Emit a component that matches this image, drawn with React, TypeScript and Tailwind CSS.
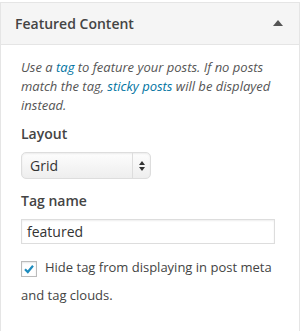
export default function App() {
  return (
    <div className="w-[300px] h-[331px] bg-white pt-[2px] font-['Open_Sans',sans-serif] text-[#444]">
      <div className="h-[329px] border-x border-t border-[#e5e5e5] bg-white">
        <div className="h-[42px] flex items-center justify-between bg-[#f5f5f5] border-b border-[#e5e5e5] pl-[14px] pr-[16px]">
          <h3 className="text-[14px] font-semibold text-[#444] leading-none">Featured Content</h3>
          <span className="w-0 h-0 border-x-[5px] border-x-transparent border-b-[6px] border-b-[#555] mb-[1px]" />
        </div>
        <div className="pl-[20px] pr-[20px] pt-[13px]">
          <p className="text-[13px] italic leading-[19px] text-[#555] pr-[4px]">
            Use a <a className="text-[#0074a2]">tag</a> to feature your posts. If no posts match the tag,{' '}
            <a className="text-[#0074a2]">sticky posts</a> will be displayed instead.
          </p>
          <div className="mt-[9px] text-[14px] font-semibold leading-[20px]">Layout</div>
          <div className="mt-[8px] w-[130px] h-[27px] flex rounded-[5px] border border-[#ddd] bg-gradient-to-b from-[#fdfdfd] to-[#eeeeee] shadow-[inset_0_1px_2px_rgba(0,0,0,0.07)]">
            <span className="flex-1 pl-[8px] text-[14px] leading-[25px] text-[#333]">Grid</span>
            <span className="w-[18px] border-l border-[#ddd] flex flex-col items-center justify-center gap-[2px]">
              <span className="w-0 h-0 border-x-[3px] border-x-transparent border-b-[4px] border-b-[#333]" />
              <span className="w-0 h-0 border-x-[3px] border-x-transparent border-t-[4px] border-t-[#333]" />
            </span>
          </div>
          <div className="mt-[12px] text-[14px] font-semibold leading-[20px]">Tag name</div>
          <div className="mt-[8px] w-[254px] h-[25px] border border-[#ddd] shadow-[inset_0_1px_2px_rgba(0,0,0,0.07)] pl-[5px] text-[14px] leading-[23px] text-[#333]">
            featured
          </div>
          <div className="mt-[9px] text-[13px] leading-[28px] text-[#444]">
            <span className="inline-flex align-[-3px] w-[16px] h-[16px] mr-[8px] border border-[#bbb] shadow-[inset_0_1px_2px_rgba(0,0,0,0.1)] items-center justify-center bg-white">
              <svg width="12" height="12" viewBox="0 0 12 12">
                <path d="M2 6.2 L4.8 9 L10 2.8" fill="none" stroke="#1e8cbe" strokeWidth="2.2" />
              </svg>
            </span>
            Hide tag from displaying in post meta and tag clouds.
          </div>
        </div>
      </div>
    </div>
  );
}
